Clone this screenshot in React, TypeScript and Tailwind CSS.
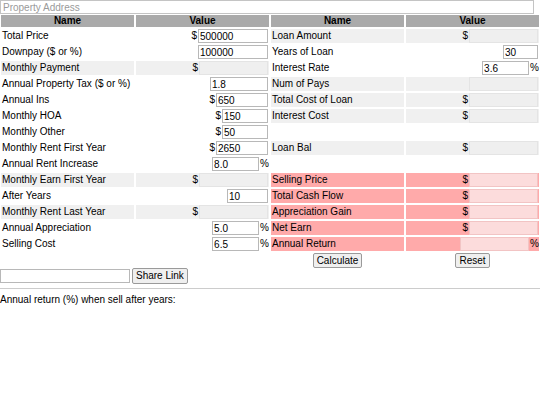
import React from "react";

type Row = {
  label?: string;
  kind?: "plain" | "gray" | "red" | "empty";
  prefix?: boolean;
  suffix?: boolean;
  w?: number;
  value?: string;
};

const leftRows: Row[] = [
  { label: "Total Price", prefix: true, w: 70, value: "500000" },
  { label: "Downpay ($ or %)", w: 70, value: "100000" },
  { label: "Monthly Payment", kind: "gray", prefix: true, w: 69 },
  { label: "Annual Property Tax ($ or %)", w: 58, value: "1.8" },
  { label: "Annual Ins", prefix: true, w: 52, value: "650" },
  { label: "Monthly HOA", prefix: true, w: 46, value: "150" },
  { label: "Monthly Other", prefix: true, w: 46, value: "50" },
  { label: "Monthly Rent First Year", prefix: true, w: 52, value: "2650" },
  { label: "Annual Rent Increase", suffix: true, w: 47, value: "8.0" },
  { label: "Monthly Earn First Year", kind: "gray", prefix: true, w: 69 },
  { label: "After Years", w: 41, value: "10" },
  { label: "Monthly Rent Last Year", kind: "gray", prefix: true, w: 69 },
  { label: "Annual Appreciation", suffix: true, w: 47, value: "5.0" },
  { label: "Selling Cost", suffix: true, w: 47, value: "6.5" },
];

const rightRows: Row[] = [
  { label: "Loan Amount", kind: "gray", prefix: true, w: 69 },
  { label: "Years of Loan", w: 35, value: "30" },
  { label: "Interest Rate", suffix: true, w: 47, value: "3.6" },
  { label: "Num of Pays", kind: "gray", w: 69 },
  { label: "Total Cost of Loan", kind: "gray", prefix: true, w: 69 },
  { label: "Interest Cost", kind: "gray", prefix: true, w: 69 },
  { kind: "empty" },
  { label: "Loan Bal", kind: "gray", prefix: true, w: 69 },
  { kind: "empty" },
  { label: "Selling Price", kind: "red", prefix: true, w: 69 },
  { label: "Total Cash Flow", kind: "red", prefix: true, w: 69 },
  { label: "Appreciation Gain", kind: "red", prefix: true, w: 69 },
  { label: "Net Earn", kind: "red", prefix: true, w: 69 },
  { label: "Annual Return", kind: "red", suffix: true, w: 69 },
];

function Cells({ row }: { row: Row }) {
  const kind = row.kind ?? "plain";
  if (kind === "empty") {
    return (
      <div className="grid grid-cols-[133px_133px] gap-x-[2px] h-[14px]">
        <div />
        <div />
      </div>
    );
  }
  const cellBg = kind === "gray" ? "bg-[#f0f0f0]" : kind === "red" ? "bg-[#ffaaaa]" : "";
  const readOnly = kind !== "plain";
  const inputCls =
    kind === "gray"
      ? "bg-[#efefef] border-[#e4e4e4]"
      : kind === "red"
      ? "bg-[#fcdcdc] border-[#f2c4c4]"
      : "bg-white border-[#b8b8b8]";
  return (
    <div className="grid grid-cols-[133px_133px] gap-x-[2px] h-[14px]">
      <div className={`${cellBg} pl-[1px] flex items-center whitespace-nowrap`}>{row.label}</div>
      <div className={`${cellBg} pr-[1px] flex items-center justify-end gap-[1px]`}>
        {row.prefix && <span>$</span>}
        <input
          readOnly={readOnly}
          defaultValue={row.value ?? ""}
          style={{ width: row.w }}
          className={`h-[14px] box-border border ${inputCls} px-[1px] text-[10px] leading-none outline-none text-black`}
        />
        {row.suffix && <span className="-mr-[1px]">%</span>}
      </div>
    </div>
  );
}

function Header() {
  return (
    <div className="grid grid-cols-[133px_133px] gap-x-[2px] h-[12px] mt-[1px] font-bold">
      <div className="bg-[#aaaaaa] flex items-center justify-center">Name</div>
      <div className="bg-[#aaaaaa] flex items-center justify-center">Value</div>
    </div>
  );
}

function Btn({ children }: { children: React.ReactNode }) {
  return (
    <button className="h-[15px] px-[3px] bg-[#efefef] border border-[#9a9a9a] rounded-[2px] text-[10px] leading-none text-black">
      {children}
    </button>
  );
}

export default function App() {
  return (
    <div
      className="w-[540px] h-[405px] bg-white text-black text-[10px] leading-[12px] overflow-hidden"
      style={{ fontFamily: '"Liberation Sans", Arial, sans-serif' }}
    >
      <input
        placeholder="Property Address"
        className="block w-[534px] h-[14px] box-border border border-[#c4c4c4] px-[2px] text-[10px] leading-none outline-none placeholder:text-[#9a9a9a]"
      />
      <div className="flex">
        <div className="w-[270px] pl-[1px] flex flex-col gap-[2px]">
          <Header />
          {leftRows.map((r, i) => (
            <Cells key={i} row={r} />
          ))}
        </div>
        <div className="w-[270px] pl-[1px] flex flex-col gap-[2px]">
          <Header />
          {rightRows.map((r, i) => (
            <Cells key={i} row={r} />
          ))}
          <div className="grid grid-cols-[133px_133px] gap-x-[2px] h-[15px]">
            <div className="flex justify-center">
              <Btn>Calculate</Btn>
            </div>
            <div className="flex justify-center">
              <Btn>Reset</Btn>
            </div>
          </div>
        </div>
      </div>
      <div className="flex items-center gap-[2px] h-[16px]">
        <input className="w-[130px] h-[14px] box-border border border-[#b8b8b8] px-[1px] text-[10px] outline-none" />
        <button className="h-[16px] px-[3px] bg-[#efefef] border border-[#9a9a9a] rounded-[2px] text-[10px] leading-none">
          Share Link
        </button>
      </div>
      <div className="mt-[4px] border-t border-[#cccccc]" />
      <div className="mt-[5px]">Annual return (%) when sell after years:</div>
    </div>
  );
}
